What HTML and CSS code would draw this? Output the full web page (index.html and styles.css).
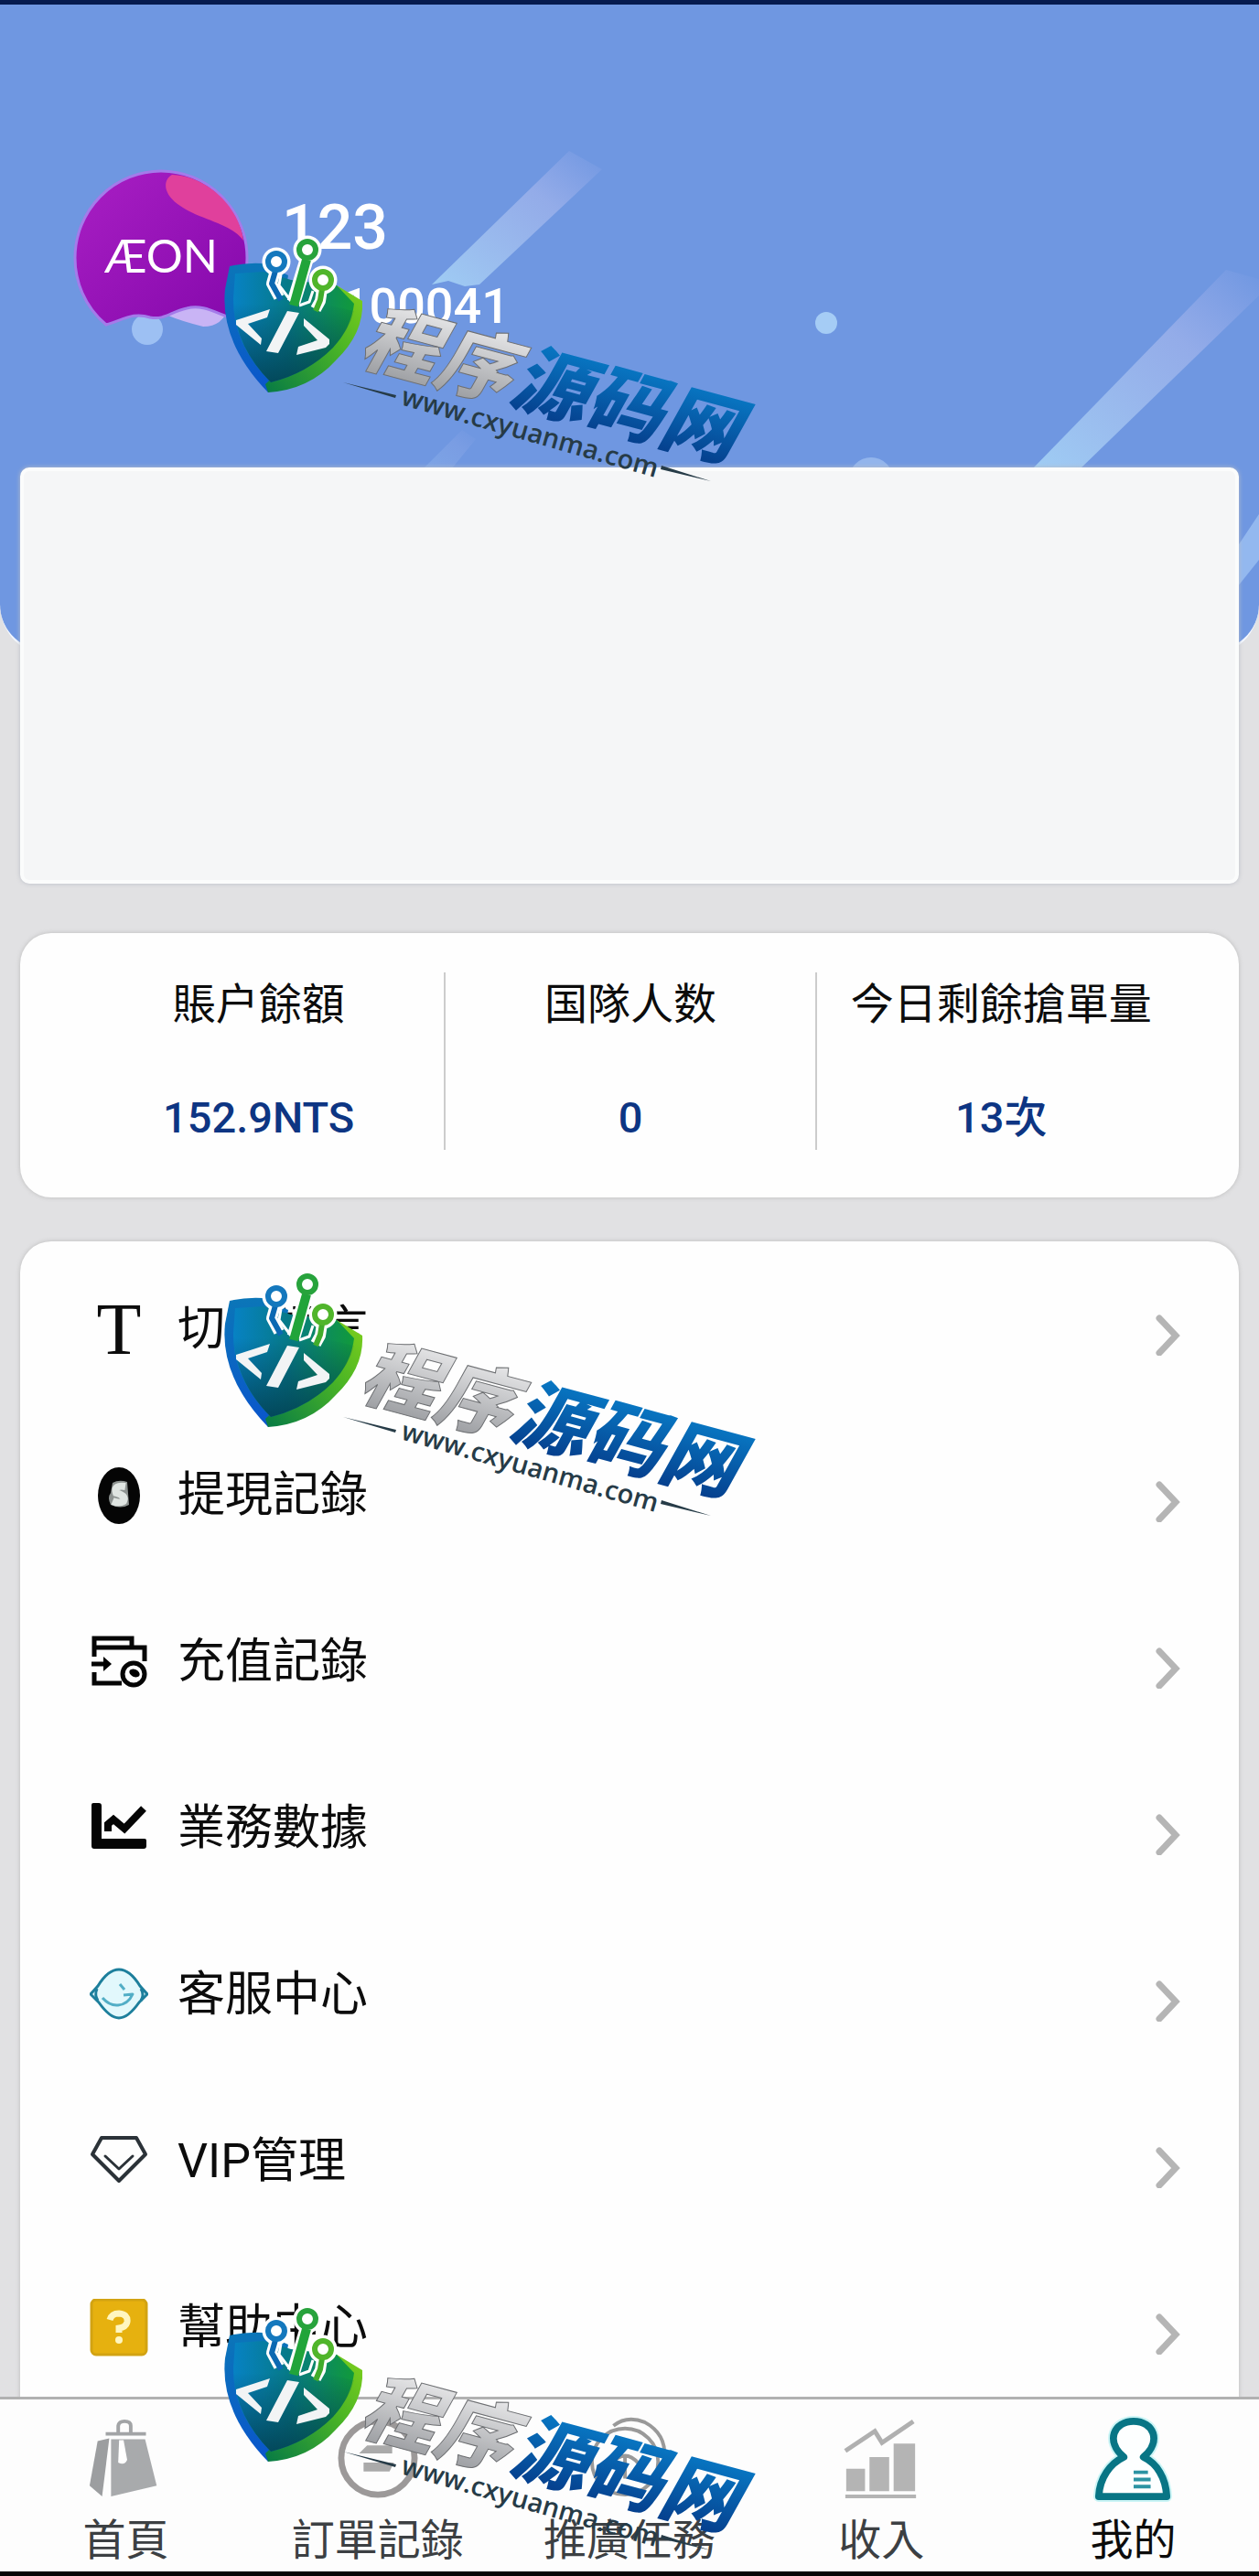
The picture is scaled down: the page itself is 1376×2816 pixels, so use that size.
FILE: index.html
```html
<!DOCTYPE html>
<html lang="zh-Hant">
<head>
<meta charset="utf-8">
<meta name="viewport" content="width=device-width, initial-scale=1">
<title>我的</title>
<link rel="stylesheet" href="styles.css">
</head>
<body>
<div class="app">

<main class="content">
  <header class="hero">
    <svg class="hero-bg" viewBox="0 0 1376 720" preserveAspectRatio="xMidYMin slice" aria-hidden="true">
      <defs>
        <linearGradient id="beam" x1="1" y1="0" x2="0" y2="1">
          <stop offset="0" stop-color="#a9b4ee" stop-opacity="0"/>
          <stop offset=".35" stop-color="#a3b5ec" stop-opacity=".7"/>
          <stop offset="1" stop-color="#9fcdf4"/>
        </linearGradient>
      </defs>
      <path fill="url(#beam)" d="M622 160 658 180 524 306 508 308 490 302 472 306z"/>
      <path fill="url(#beam)" opacity=".3" d="M505 465 520 475 490 512 458 512z"/>
      <path fill="url(#beam)" d="M1340 290 1376 300 1376 318 1180 508 1128 508z"/>
      <path fill="#93b8ef" d="M1376 557 1376 607 1352 637 1352 593z"/>
      <circle cx="903" cy="348" r="12" fill="#a5ccf5"/>
      <circle cx="952" cy="519" r="24" fill="#93b5ec"/>
      <circle cx="161" cy="355" r="17" fill="#9dc0f3"/>
    </svg>
    <svg class="avatar" viewBox="0 0 192 192" role="img" aria-label="AEON">
      <defs>
        <linearGradient id="plum" x1="0" y1="0" x2="1" y2="1">
          <stop offset="0" stop-color="#a91fc4"/>
          <stop offset="1" stop-color="#8408ab"/>
        </linearGradient>
      </defs>
      <path fill="#c9b4f5" d="M108 154Q134 138 170 152Q164 174 142 174Q118 168 104 162z"/>
      <path fill="url(#plum)" stroke="#a47bea" stroke-width="3" d="M36 172C12 152 2 124 2 99A94 95 0 0 1 190 99C190 124 182 148 168 163C152 157 140 150 124 154C106 158 100 167 84 164C66 158 56 166 36 172z"/>
      <path fill="#e0409c" d="M108 8C150 10 182 46 186 80C172 60 138 58 114 40C98 28 98 14 108 8z"/>
      <text x="96" y="115" class="avatar-text">ÆON</text>
    </svg>
    <div class="profile">
      <h1 class="name">123</h1>
      <p class="uid">ID:100041</p>
    </div>
  </header>

  <section class="banner"></section>

  <section class="stats">
    <dl class="stat"><dt>賬户餘額</dt><dd>152.9NTS</dd></dl>
    <dl class="stat"><dt>国隊人数</dt><dd>0</dd></dl>
    <dl class="stat"><dt>今日剩餘搶單量</dt><dd>13次</dd></dl>
  </section>

  <section class="menu">
    <a class="row" href="#language">
      <span class="icon serif-t">T</span>
      <span>切換語言</span>
      <svg class="chevron" viewBox="0 0 32 48"><path d="M7 7 25 26 7 45"/></svg>
    </a>
    <a class="row" href="#withdraw">
      <svg class="icon" viewBox="0 0 64 64">
        <ellipse cx="32" cy="32" rx="23" ry="31" fill="#050505"/>
        <path fill="#8d9290" d="M25 18Q32 14 41 17L43 42Q34 47 23 42Q19 34 23 29z"/>
        <path fill="none" stroke="#dfe4e1" stroke-width="8" d="M39 22Q26 20 29 29Q40 32 37 38Q32 41 25 38"/>
      </svg>
      <span>提現記錄</span>
      <svg class="chevron" viewBox="0 0 32 48"><path d="M7 7 25 26 7 45"/></svg>
    </a>
    <a class="row" href="#recharge">
      <svg class="icon" viewBox="0 0 64 64">
        <g fill="none" stroke="#050505" stroke-width="5">
          <path d="M5 26V6H46V15M5 16H60V31" />
          <path d="M2 34H16M5 43V55H35"/>
          <circle cx="48" cy="45" r="12"/>
        </g>
        <path d="M15 26 24 34 15 42z"/>
        <ellipse cx="49" cy="44" rx="6" ry="4" transform="rotate(25 49 44)"/>
      </svg>
      <span>充值記錄</span>
      <svg class="chevron" viewBox="0 0 32 48"><path d="M7 7 25 26 7 45"/></svg>
    </a>
    <a class="row" href="#business">
      <svg class="icon" viewBox="0 0 64 64">
        <path fill="#050505" d="M2 6Q2 4 4 4H10Q13 4 13 7V43H60Q62 43 62 45V51Q62 54 59 54H5Q2 54 2 51z"/>
        <path fill="none" stroke="#050505" stroke-width="8" d="M20 35V27L26 22 38 32 59 10"/>
      </svg>
      <span>業務數據</span>
      <svg class="chevron" viewBox="0 0 32 48"><path d="M7 7 25 26 7 45"/></svg>
    </a>
    <a class="row" href="#service">
      <svg class="icon" viewBox="0 0 64 64">
        <g fill="#e2f8fc" stroke="#1d7f9c" stroke-width="3" stroke-linejoin="round">
          <path d="M9 22Q20 4 32 4 44 4 55 22L63 31 54 40Q42 57 32 57 22 57 10 40L1 31z"/>
          <path fill="none" d="M8 25Q5 32 9 38M56 25Q60 32 56 38"/>
          <path fill="none" stroke="#52aec6" d="M14 35Q22 44 31 43 42 42 47 31L37 32M33 20 38 26"/>
        </g>
      </svg>
      <span>客服中心</span>
      <svg class="chevron" viewBox="0 0 32 48"><path d="M7 7 25 26 7 45"/></svg>
    </a>
    <a class="row" href="#vip">
      <svg class="icon" viewBox="0 0 64 64">
        <g fill="none" stroke="#2b3238" stroke-width="4" stroke-linejoin="round" stroke-linecap="round">
          <path d="M13 6H51L61 24 32 53 3 24z"/>
          <path stroke-width="3" d="M17 26 32 40 47 26"/>
        </g>
      </svg>
      <span>VIP管理</span>
      <svg class="chevron" viewBox="0 0 32 48"><path d="M7 7 25 26 7 45"/></svg>
    </a>
    <a class="row" href="#help">
      <svg class="icon" viewBox="0 0 64 64">
        <rect x="2" y="1" width="60" height="60" rx="5" fill="#e6b10f" stroke="#d2a313" stroke-width="3"/>
        <path fill="none" stroke="#fff6c0" stroke-width="7" d="M22 23Q24 16 32 16 42 17 41 25 40 31 32 32V37"/>
        <circle cx="32" cy="45" r="4" fill="#fff6c0"/>
      </svg>
      <span>幫助中心</span>
      <svg class="chevron" viewBox="0 0 32 48"><path d="M7 7 25 26 7 45"/></svg>
    </a>
  </section>
</main>

<nav class="tabs">
  <a class="tab" href="#home">
    <svg viewBox="0 0 90 90">
      <path fill="#9c9ea0" d="M26 23 18 88 4 76 13 26z"/>
      <path fill="#a8aaac" d="M28 24H66L79 76 28 88z"/>
      <path fill="none" stroke="#a2a4a6" stroke-width="4" d="M36 17V9Q37 4 43 4 50 4 50 9V17M22 18H67"/>
      <path fill="#fff" d="M37 25H42L46 47Q43 54 36 50z"/>
    </svg>
    <span>首頁</span>
  </a>
  <a class="tab" href="#orders">
    <svg viewBox="0 0 90 90">
      <circle cx="45" cy="45" r="41" fill="none" stroke="#9c9999" stroke-width="7"/>
      <path fill="#aaa" d="M24 40 33 31H61V40zM29 50H63L58 60H29z"/>
    </svg>
    <span>訂單記錄</span>
  </a>
  <a class="tab" href="#tasks">
    <svg viewBox="0 0 90 90">
      <g fill="none" stroke="#999" stroke-width="4">
        <circle cx="40" cy="49" r="37"/>
        <path d="M27 9Q42-3 62 5 86 18 84 44 82 64 68 74"/>
        <path d="M25 51Q40 34 55 51M40 42V68"/>
      </g>
    </svg>
    <span>推廣任務</span>
  </a>
  <a class="tab" href="#income">
    <svg viewBox="0 0 90 90">
      <g fill="#b4b4b4">
        <path d="M6 57H27V82H6zM32 44H54V82H32zM59 29H83V82H59z"/>
        <path d="M5 86H84V90H5z"/>
      </g>
      <path fill="none" stroke="#b0b0b0" stroke-width="5" d="M5 37 38 15 46 28 81 4"/>
    </svg>
    <span>收入</span>
  </a>
  <a class="tab active" href="#mine">
    <svg viewBox="0 0 90 90">
      <path fill="#fff" stroke="#9aeef0" stroke-width="12" stroke-linejoin="round" opacity=".5" d="M35 44C14 26 24 4 46 4S78 26 57 44C72 51 82 67 83 88H7C8 67 20 51 35 44z"/>
      <path fill="#fdffff" stroke="#087585" stroke-width="8" stroke-linejoin="round" d="M35 44C14 26 24 4 46 4S78 26 57 44C72 51 82 67 83 88H7C8 67 20 51 35 44z"/>
      <path fill="none" stroke="#2c93a3" stroke-width="4" d="M46 61H62M46 69H65M46 77H65"/>
    </svg>
    <span>我的</span>
  </a>
</nav>

<!-- site stamp, drawn once and repeated down the page -->
<svg class="defs" aria-hidden="true">
  <defs>
    <linearGradient id="g-left" x1="0" y1="0" x2="0" y2="1">
      <stop offset="0" stop-color="#0b76b8"/><stop offset="1" stop-color="#0a55cc"/>
    </linearGradient>
    <linearGradient id="g-right" x1="1" y1="0" x2="0" y2="1">
      <stop offset="0" stop-color="#7fd01c"/><stop offset=".4" stop-color="#4bb525"/><stop offset="1" stop-color="#067a45"/>
    </linearGradient>
    <linearGradient id="g-body" x1="0" y1="0" x2="1" y2="0">
      <stop offset="0" stop-color="#0782c4"/><stop offset=".45" stop-color="#067a88"/><stop offset="1" stop-color="#119a3a"/>
    </linearGradient>
    <linearGradient id="g-shade" x1="0" y1="0" x2="0" y2="1">
      <stop offset=".2" stop-color="#023a55" stop-opacity="0"/><stop offset="1" stop-color="#023f50" stop-opacity=".85"/>
    </linearGradient>
    <linearGradient id="g-silver" x1="0" y1="0" x2="0" y2="1">
      <stop offset=".1" stop-color="#f0f0f1"/><stop offset=".9" stop-color="#9b9da1"/>
    </linearGradient>
    <linearGradient id="g-blue" x1="0" y1="0" x2="0" y2="1">
      <stop offset=".2" stop-color="#0878c4"/><stop offset=".9" stop-color="#053d8b"/>
    </linearGradient>
    <symbol id="stamp" viewBox="0 0 610 290">
      <path fill="url(#g-left)" d="M21 37Q38 33 57 34L85 47 63 175Q10 120 16 62z"/>
      <path fill="url(#g-right)" d="M138 58 166 75Q168 110 137 140 108 172 63 175L60 166 130 100z"/>
      <path fill="url(#g-body)" d="M27 45 58 43 88 52 138 58 157 78Q154 104 134 126 106 154 66 164 24 122 25 72z"/>
      <path fill="url(#g-shade)" d="M25 78 62 56 88 70 157 86Q152 106 134 126 106 154 66 164 28 126 25 78z"/>
      <g fill="none" stroke-linejoin="round">
        <g stroke="#fff" stroke-width="12">
          <path d="M71 42 67 56 75 71M122 62 120 75 115 84"/>
          <path stroke-width="15" d="M105 30 91 76"/>
        </g>
        <g fill="#fff" stroke="#fff" stroke-width="7"><circle cx="72" cy="32" r="12"/><circle cx="106" cy="19" r="12"/><circle cx="123" cy="52" r="12"/></g>
        <path stroke="#fff" stroke-width="3" d="M77 46 75 58 88 75M112 64 108 76 97 80"/>
        <path stroke="#0c69b2" stroke-width="6" d="M71 42 67 56 77 74"/>
        <path stroke="#21a43a" stroke-width="10" d="M105 30 91 80"/>
        <path stroke="#41ac2b" stroke-width="6" d="M122 62 120 74 115 86"/>
        <circle cx="72" cy="32" r="9" stroke="#1478bd" stroke-width="6"/>
        <circle cx="106" cy="19" r="9" stroke="#27a33c" stroke-width="6"/>
        <circle cx="123" cy="52" r="9" stroke="#50b52b" stroke-width="6"/>
      </g>
      <path fill="#f2f4f5" d="M65 84 62 93 41 100 56 116 55 123 28 101V96zM84 86 97 88 74 132 61 130zM102 94 130 117V122L126 126 94 134 96 125 117 118 102 102z"/>
      <g transform="translate(168 111) rotate(15)">
        <text y="31" class="stamp-name" fill="url(#g-silver)" stroke="#6d6f72" stroke-width="1">程序</text>
        <text x="170" y="31" class="stamp-name" fill="url(#g-blue)">源码网</text>
      </g>
      <text class="stamp-url" transform="translate(207 188) rotate(16)">www.cxyuanma.com</text>
      <path fill="#263b47" d="M145 164 203 178 202 181zM493 255 547 272 492 259z"/>
    </symbol>
  </defs>
</svg>
<div class="stamps" aria-hidden="true">
  <svg class="stamp"><use href="#stamp"/></svg>
  <svg class="stamp"><use href="#stamp"/></svg>
  <svg class="stamp"><use href="#stamp"/></svg>
</div>

</div>
</body>
</html>
```
FILE: styles.css
```css
* { box-sizing: border-box; }

body {
  margin: 0;
  background: #e1e1e3;
  color: #0c0c0c;
  font-family: Roboto, "Noto Sans CJK TC", sans-serif;
}

h1, p, dl, dd { margin: 0; }
a { color: inherit; text-decoration: none; }

.app {
  position: relative;
  display: flex;
  flex-direction: column;
  height: 100vh;
  border-top: 5px solid #061b4f;
  border-bottom: 5px solid #050505;
}

.content {
  flex: 1;
  min-height: 0;
  overflow: hidden;
}

/* top of the page */
.hero {
  position: relative;
  display: flex;
  gap: 36px;
  height: 712px;
  padding: 178px 80px 0;
  overflow: hidden;
  background: #6f97e1;
  border-bottom: 4px solid #f4f8ff;
  border-radius: 0 0 56px 56px;
}
.hero-bg {
  position: absolute;
  top: 0;
  left: 0;
  width: 100%;
  height: 100%;
}
.avatar {
  position: relative;
  width: 192px;
  height: 192px;
}
.avatar-text {
  fill: #fff;
  font: 50px Lato, sans-serif;
  text-anchor: middle;
}
.profile {
  position: relative;
  padding-top: 24px;
  color: #fff;
}
.name {
  font-size: 68px;
  font-weight: 500;
  line-height: 84px;
}
.uid {
  font-size: 54px;
  font-weight: 500;
  line-height: 88px;
}

/* cards */
.banner, .stats, .menu { margin: 0 22px; }

.banner {
  position: relative;
  height: 455px;
  margin-top: -206px;
  background: #f5f6f7;
  border: 4px solid #fbfcfc;
  border-radius: 10px;
  box-shadow: 0 0 5px #b9bdc6;
}
.stats {
  display: grid;
  grid-template-columns: repeat(3, 1fr);
  margin-top: 54px;
  padding: 43px 58px 52px;
  background: #fefefe;
  border-radius: 34px;
  box-shadow: 0 0 5px #bbb;
}
.stat {
  text-align: center;
  white-space: nowrap;
}
.stat + .stat { border-left: 2px solid #ccc; }
.stat dt {
  font-size: 47px;
  line-height: 70px;
}
.stat dd {
  padding-top: 54px;
  color: #0d3583;
  font-size: 47px;
  font-weight: 500;
  line-height: 70px;
}

.menu {
  margin-top: 48px;
  padding: 5px 62px 0 76px;
  background: #fefefe;
  border-radius: 34px 34px 0 0;
  box-shadow: 0 0 5px #bbb;
}
.row {
  display: flex;
  align-items: center;
  gap: 32px;
  height: 182px;
  font-size: 52px;
  line-height: 64px;
}
.icon {
  width: 64px;
  height: 64px;
}
.serif-t {
  font-family: "Liberation Serif", serif;
  font-size: 80px;
  text-align: center;
}
.chevron {
  width: 32px;
  height: 48px;
  margin: 10px 0 0 auto;
}
.chevron path {
  fill: none;
  stroke: #b5b5b5;
  stroke-width: 7;
  stroke-linecap: round;
}

/* bottom tabs */
.tabs {
  display: grid;
  grid-template-columns: repeat(5, 1fr);
  padding: 20px 0 4px;
  background: #fdfdfd;
  border-top: 3px solid #b1b1b1;
}
.tab {
  display: flex;
  flex-direction: column;
  align-items: center;
  gap: 16px;
  color: #3c4043;
  font-size: 47px;
  line-height: 60px;
}
.tab svg {
  width: 88px;
  height: 88px;
  overflow: visible;
}
.tab.active { color: #0c0c0c; }

/* stamps lie over everything */
.defs {
  position: absolute;
  width: 0;
  height: 0;
}
.stamps {
  position: absolute;
  top: 249px;
  left: 230px;
  display: grid;
  gap: 841px;
  pointer-events: none;
}
.stamp {
  display: block;
  width: 610px;
  height: 290px;
}
.stamp-name {
  font: italic 900 84px "Noto Sans CJK SC", sans-serif;
}
.stamp-url {
  fill: #263b47;
  font: 600 29px "Open Sans", sans-serif;
}
```
